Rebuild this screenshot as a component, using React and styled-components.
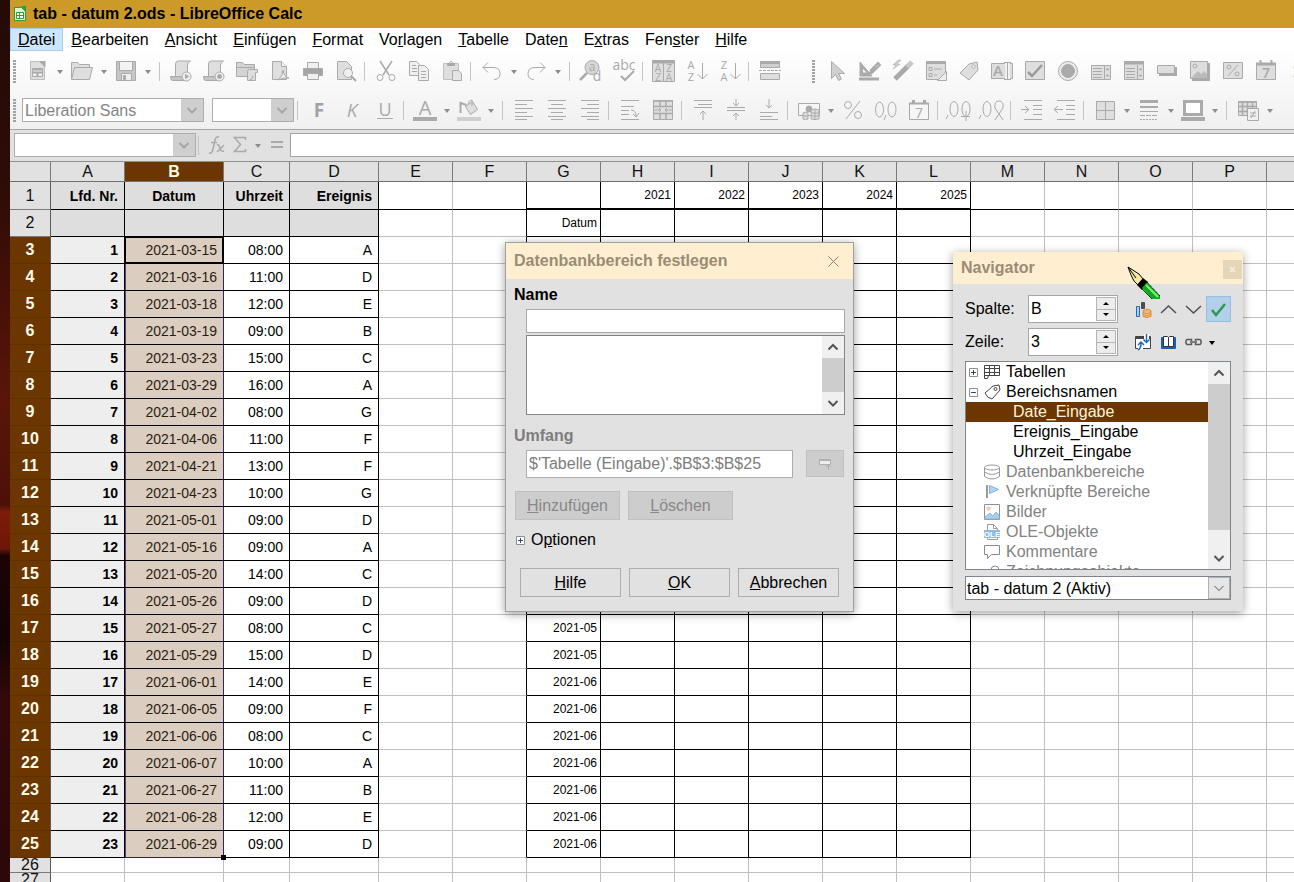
// src/App.jsx

import React from "react";
import styled, { createGlobalStyle, css } from "styled-components";

const GlobalStyle = createGlobalStyle`
  * {
    box-sizing: border-box;
  }
  body {
    margin: 0;
    overflow: hidden;
  }
  button, input, select {
    font: inherit;
    color: inherit;
    margin: 0;
    padding: 0;
    border: none;
    border-radius: 0;
    background: none;
    outline: none;
  }
  select {
    appearance: none;
  }
  svg {
    overflow: visible;
  }
`;

const Desktop = styled.div`
  display: flex;
  height: 100vh;
  font-family: "Liberation Sans", Arial, sans-serif;
  font-size: 16px;
  color: #000;
  background: linear-gradient(
    #250a06 0,
    #2c0c07 180px,
    #461008 300px,
    #5a1509 400px,
    #4c1008 505px,
    #7e1c08 512px,
    #6e1608 548px,
    #1c0404 556px,
    #140303 640px,
    #34090a 700px,
    #2c0808 100%
  );
`;

const AppWindow = styled.div`
  position: relative;
  flex: 1;
  min-width: 0;
  margin-left: 10px;
  overflow: hidden;
  background: #fff;
`;

const TitleBar = styled.header`
  display: flex;
  align-items: center;
  gap: 6px;
  height: 28px;
  padding-left: 3px;
  background: #cb9a29;
  font-weight: bold;
  white-space: nowrap;
`;

const MenuBar = styled.nav`
  display: flex;
  height: 23px;
  background: #fff;
`;

const MenuItem = styled.button`
  padding: 0 7px;
  border: 1px solid ${(p) => (p.$active ? "#a4cdf0" : "transparent")};
  background: ${(p) => (p.$active ? "#cce6fd" : "transparent")};
  white-space: nowrap;
`;

const Toolbars = styled.div`
  background: linear-gradient(#fefefe, #f0f0f0);
  border-bottom: 1px solid #a6a6a6;
`;

const Toolbar = styled.div`
  display: flex;
  align-items: center;
  height: ${(p) => p.$height}px;
  padding-left: 3px;
  overflow: hidden;
`;

const Grip = styled.div`
  flex: none;
  width: 3px;
  height: 23px;
  margin-right: 5px;
  background: repeating-linear-gradient(#a2a2a2 0 2px, transparent 2px 3px);
`;

const ArrowButton = styled.button`
  display: flex;
  flex: none;
  align-items: center;
  justify-content: center;
  width: 11px;
  height: 26px;
`;

const Sep = styled.div`
  flex: none;
  width: 7px;
  height: 19px;
  background: linear-gradient(#c4c4c4, #c4c4c4) 2px 0 / 1px 100% no-repeat;
  ${ArrowButton} + & {
    margin-left: 4px;
  }
`;

const ToolButton = styled.button`
  display: flex;
  flex: none;
  align-items: center;
  justify-content: center;
  width: ${(p) => p.$width || 33}px;
  height: 26px;
`;

const ToolGap = styled.div`
  flex: none;
  width: 26px;
`;

const FontBoxes = styled.div`
  display: flex;
  flex: none;
  gap: 8px;
  margin: 0 1px;
`;

const Combo = styled.div`
  display: flex;
  flex: none;
  width: ${(p) => p.$width}px;
  height: 24px;
  border: 1px solid #adadad;
  background: #fff;
  color: #848484;

  select,
  input {
    flex: 1;
    min-width: 0;
    padding-left: 2px;
  }
`;

const ComboArrow = styled.span`
  display: flex;
  align-items: center;
  justify-content: center;
  width: 22px;
  background: #cfcfcf;
  pointer-events: none;
`;

const FormulaBar = styled.div`
  display: flex;
  align-items: center;
  height: 32px;
  padding: 0 0 1px 4px;
  background: #e1e1e1;
  border-bottom: 1px solid #8f8f8f;
`;

const FormulaInput = styled.input`
  flex: 1;
  height: 24px;
  margin-left: 2px;
  padding: 0 4px;
  background: #fff;
  border: 1px solid #a3a3a3;
  border-right: none;
`;

/* ---------- sheet ---------- */

const Sheet = styled.table`
  table-layout: fixed;
  width: 100%;
  border-collapse: separate;
  border-spacing: 0;

  th,
  td {
    padding: 0;
    overflow: hidden;
    line-height: 14px;
    white-space: nowrap;
  }
`;

const Col = styled.col`
  width: ${(p) => (p.$width ? `${p.$width}px` : "auto")};
`;

const HeadRow = styled.tr`
  height: ${(p) => p.$height}px;
`;

const ColHead = styled.th`
  font-weight: ${(p) => (p.$active ? "bold" : "normal")};
  color: ${(p) => (p.$active ? "#fffbe8" : "#111")};
  background: ${(p) => (p.$active ? "#6b3600" : "#e1e1e1")};
  border-right: 1px solid #7a7a7a;
  border-bottom: 1px solid #6e6e6e;
`;

const RowHead = styled.th`
  font-weight: ${(p) => (p.$active ? "bold" : "normal")};
  color: ${(p) => (p.$active ? "#fffbe8" : "#111")};
  background: ${(p) => (p.$active ? "#6b3600" : "#e1e1e1")};
  border-right: 1px solid #5c5c5c;
  border-bottom: 1px solid ${(p) => (p.$active ? "#603000" : "#7a7a7a")};
`;

const Cell = styled.td`
  text-align: right;
  font-size: 14px;
  border-right: 1px solid ${(p) => (p.$right ? "#000" : "#c0c0c0")};
  border-bottom: 1px solid ${(p) => (p.$bottom ? "#000" : "#c0c0c0")};

  && {
    padding-right: ${(p) => (p.$center ? 0 : p.$small ? 3 : 6)}px;
  }
  ${(p) =>
    p.$small &&
    css`
      font-size: 12px;
    `}
  ${(p) =>
    p.$kind === "head" &&
    css`
      font-weight: bold;
      background: #dedede;
    `}
  ${(p) =>
    p.$center &&
    css`
      text-align: center;
    `}
  ${(p) =>
    p.$kind === "number" &&
    css`
      font-weight: bold;
      background: #eee;
    `}
  ${(p) =>
    p.$kind === "selected" &&
    css`
      color: #2b1c10;
      background: #dbcdc0;
      border-right-color: #39205c;
      box-shadow: inset 1px 0 #5d3f7c;
    `}
  ${(p) =>
    p.$thick &&
    css`
      border-bottom-width: 2px;
    `}
  ${(p) =>
    p.$cursor &&
    css`
      border-right-color: #000;
      box-shadow: inset 0 0 0 1px #000;
    `}
`;

const LastSelected = styled(Cell)`
  position: relative;
  border-bottom-color: #39205c;

  && {
    overflow: visible;
  }

  &::after {
    content: "";
    position: absolute;
    right: -3px;
    bottom: -3px;
    width: 5px;
    height: 5px;
    background: #000;
  }
`;

/* ---------- floating windows ---------- */

const Floating = styled.section`
  position: absolute;
  left: ${(p) => p.$left}px;
  top: ${(p) => p.$top}px;
  width: ${(p) => p.$width}px;
  background: #e1e1e1;
  border: ${(p) => (p.$bordered ? "1px solid #a3a09a" : "none")};
  box-shadow: 0 2px 9px rgba(0, 0, 0, 0.38);
`;

const FloatingTitle = styled.div`
  display: flex;
  align-items: center;
  justify-content: space-between;
  height: ${(p) => p.$height}px;
  padding-left: 8px;
  background: #ffeed0;
  color: #998c76;
  font-weight: bold;

  h2 {
    margin: 0;
    font-size: 16px;
  }
`;

const CloseButton = styled.button`
  display: flex;
  align-items: center;
  justify-content: center;
  width: 40px;
  height: 30px;
`;

const SmallClose = styled.button`
  display: flex;
  align-items: center;
  justify-content: center;
  width: 19px;
  height: 19px;
  margin: 3px 1px 0 0;
  background: #e5d5b9;
`;

const DialogBody = styled.div`
  display: flex;
  flex-direction: column;
  padding: 7px 8px 14px;
`;

const GroupLabel = styled.label`
  font-weight: bold;
  line-height: 18px;
  margin-bottom: 5px;
  color: ${(p) => (p.$dim ? "#7d7d7d" : "#000")};
`;

const NameInput = styled.input`
  height: 24px;
  margin: 0 0 2px 12px;
  padding: 0 4px;
  background: #fff;
  border: 1px solid #a8a8a8;
`;

const RangeList = styled.div`
  display: flex;
  height: 80px;
  margin: 0 0 12px 12px;
  background: #fff;
  border: 1px solid #858585;

  select {
    flex: 1;
    overflow: hidden;
  }
`;

const ScrollBar = styled.div`
  display: flex;
  flex: none;
  flex-direction: column;
  width: 22px;
  background: #f0f0f0;
`;

const ScrollButton = styled.button`
  display: flex;
  flex: none;
  align-items: center;
  justify-content: center;
  height: 22px;
`;

const ScrollThumb = styled.div`
  flex: none;
  height: ${(p) => p.$height}px;
  margin-bottom: auto;
  background: #cdcdcd;
`;

const ScopeRow = styled.div`
  display: flex;
  gap: 13px;
  margin: 0 1px 13px 12px;

  input {
    flex: 1;
    min-width: 0;
    height: 28px;
    padding: 0 2px;
    color: #7d7d7d;
    background: #fff;
    border: 1px solid #adadad;
  }
`;

const DisabledButton = styled.button`
  display: flex;
  align-items: center;
  justify-content: center;
  width: ${(p) => p.$width}px;
  height: ${(p) => p.$height}px;
  color: #888;
  background: #cdcdcd;
  border: 1px solid #c0c0c0;
`;

const EditButtons = styled.div`
  display: flex;
  gap: 8px;
  margin: 0 0 11px 1px;
`;

const OptionsToggle = styled.button`
  display: flex;
  align-items: center;
  gap: 6px;
  height: 18px;
  margin: 0 0 19px 2px;
`;

const DialogButtons = styled.div`
  display: flex;
  gap: 8px;
  margin: 0 6px;
`;

const DialogButton = styled.button`
  flex: 1;
  height: 29px;
  border: 1px solid #adadad;
`;

const NavBody = styled.div`
  display: flex;
  flex-direction: column;
  padding: 11px 12px;
`;

const NavRow = styled.div`
  display: flex;
  align-items: center;
  margin-bottom: 5px;

  label {
    width: 63px;
  }
`;

const SpinBox = styled.div`
  display: flex;
  width: 90px;
  height: 28px;
  margin-right: 13px;
  background: #fff;
  border: 1px solid #a6a6a6;

  input {
    flex: 1;
    min-width: 0;
    padding-left: 2px;
  }
`;

const SpinButtons = styled.div`
  display: flex;
  flex-direction: column;
  width: 20px;
  margin: 1px;

  button {
    display: flex;
    flex: 1;
    align-items: center;
    justify-content: center;
    background: #ededed;
    border: 1px solid #b4b4b4;
  }
  button + button {
    border-top: none;
  }
`;

const NavButton = styled.button`
  display: flex;
  align-items: center;
  justify-content: center;
  width: ${(p) => p.$width || 25}px;
  height: 26px;
  background: ${(p) => (p.$on ? "#b3d0ea" : "transparent")};
  border: 1px solid ${(p) => (p.$on ? "#94bfe4" : "transparent")};
`;

const TreeBox = styled.div`
  display: flex;
  height: 209px;
  margin-bottom: 6px;
  overflow: hidden;
  background: #fff;
  border: 1px solid #7f858c;
`;

const Tree = styled.ul`
  flex: 1;
  min-width: 0;
  margin: 0;
  padding: 0;
  list-style: none;
`;

const TreeItem = styled.li`
  display: flex;
  align-items: center;
  height: 20px;
  padding-left: ${(p) => (p.$level === 2 ? 47 : 3)}px;
  color: ${(p) => (p.$selected ? "#fff3dc" : p.$dim ? "#828282" : "#000")};
  background: ${(p) => (p.$selected ? "#6b3600" : "transparent")};
  white-space: nowrap;
`;

const Toggle = styled.button`
  display: flex;
  width: 15px;
`;

const TreeIcon = styled.span`
  display: flex;
  width: 22px;
`;

const DocSelect = styled.div`
  display: flex;
  height: 24px;
  background: #fff;
  border: 1px solid #7f858c;

  select {
    flex: 1;
    min-width: 0;
    padding-left: 1px;
  }
  span {
    display: flex;
    align-items: center;
    justify-content: center;
    width: 22px;
    background: #e6e6e6;
    border: 1px solid #b0b0b0;
    pointer-events: none;
  }
`;

const PenCursor = styled.svg`
  position: absolute;
  left: 1117px;
  top: 266px;
`;

/* ---------- icons ---------- */

const S = "#aaa";
const F = "#dedede";

const GlyphText = ({ x, y, size = 10, children, weight = 400, fill = S }) => (
  <text
    x={x}
    y={y}
    fontSize={size}
    fontWeight={weight}
    fill={fill}
    stroke="none"
    textAnchor="middle"
    fontFamily="'Open Sans', Lato, sans-serif"
  >
    {children}
  </text>
);

const Lines = ({ rows, w = 18, x = 3, center, right }) =>
  rows.map(([y, len]) => {
    const start = center ? x + (w - len) / 2 : right ? x + w - len : x;
    return <path key={y} d={`M${start} ${y}.5h${len}`} />;
  });

const glyphs = {
  newDoc: (
    <>
      <path fill={F} stroke="#bdbdbd" d="M4.500 2.500h9l5 5v13h-14z" />
      <path fill={S} stroke="none" d="M13 2h6.500v6.500z" />
      <path fill="#efefef" d="M6.500 9.500h10v8h-10z" />
      <path d="M6.500 13.500h10M11.500 13.500v4M6 10.500h11" strokeWidth="2" />
    </>
  ),
  open: (
    <>
      <path fill={F} d="M1.500 19.500v-16h6l2 2h10v3" />
      <path fill={F} d="M1.500 20.500l3-12h18l-3 12z" />
    </>
  ),
  save: (
    <>
      <path fill="#c6c6c6" d="M2.500 2.500h19v19h-19z" />
      <path fill="#f3f3f3" d="M5.500 2.500h13v9h-13z" />
      <path fill="#eee" d="M7.500 14.500h10v7h-10z" />
      <path fill={S} d="M9.500 16.500h2v4h-2z" />
    </>
  ),
  macroRun: (
    <>
      <path fill={F} d="M6.500 17v-12q0-3 3-3h12q-3 1-3 4v11" />
      <path fill="#c4c4c4" d="M1.500 17.500h14v4h-12q-2 0-2-4z" />
      <circle cx="17.500" cy="17.500" r="4.500" fill="#eee" />
      <path fill={S} d="M16.500 15.500l3 2-3 2z" />
    </>
  ),
  macroRec: (
    <>
      <path fill={F} d="M6.500 17v-12q0-3 3-3h12q-3 1-3 4v11" />
      <path fill="#c4c4c4" d="M1.500 17.500h14v4h-12q-2 0-2-4z" />
      <circle cx="17.500" cy="17.500" r="4.500" fill="#eee" />
      <circle cx="17.500" cy="17.500" r="2" fill={S} />
    </>
  ),
  template: (
    <>
      <path fill="#d4d4d4" d="M1.500 17.500v-14h6l2 2h10v12z" />
      <path d="M1.500 8.500h18" />
      <path fill={F} d="M12.500 21.500v-9q0-2 2-2h8v3h-2v8z" />
      <path d="M14 21.500q4-1 4-5" />
    </>
  ),
  pdf: (
    <>
      <path fill={F} d="M4.500 2.500h9l5 5v13h-14z" />
      <path fill="#f4f4f4" d="M13.500 2.500v5h5" />
      <path d="M10 21q5-4 5-10 1 7 6 8-5-1-11 2" fill="#efefef" />
    </>
  ),
  print: (
    <>
      <path fill="#f0f0f0" d="M6.500 3.500h11v6h-11z" />
      <path fill="#a4a4a4" d="M2.500 9.500h19v7h-19z" />
      <path fill="#f0f0f0" d="M6.500 14.500h11v6h-11z" />
    </>
  ),
  preview: (
    <>
      <path fill={F} d="M3.500 2.500h9l5 5v13h-14z" />
      <circle cx="14" cy="14" r="4.500" fill="#f0f0f0" />
      <path d="M17 17l5 5" strokeWidth="2" />
    </>
  ),
  cut: (
    <>
      <path d="M6 2l9 14M18 2L9 16" strokeWidth="1.500" />
      <circle cx="6" cy="18.500" r="3" />
      <circle cx="18" cy="18.500" r="3" />
    </>
  ),
  copy: (
    <>
      <path fill="#efefef" d="M2.500 2.500h7l3 3v11h-10z" />
      <path d="M5 6.500h4M5 9.500h5M5 12.500h5" />
      <path fill="#efefef" d="M11.500 6.500h6l4 4v11h-10z" />
      <path d="M14 12.500h5M14 15.500h5M14 18.500h5" />
    </>
  ),
  paste: (
    <>
      <path fill={F} stroke="#c0c0c0" d="M3.500 4.500h15v16h-15z" />
      <path fill={S} d="M7.500 4.500h7v2h-7z" />
      <path d="M9.500 4q1.500-4 3 0" />
      <path fill="#e4e4e4" d="M12.500 11.500h6l3 3v7h-9z" />
    </>
  ),
  undo: <path d="M8 3.500l-5 5 5 5M3 8.500h10q7 0 7 6t-6 6" />,
  redo: <path d="M16 3.500l5 5-5 5M21 8.500h-10q-7 0-7 6t6 6" />,
  find: (
    <>
      <circle cx="13" cy="8.500" r="7" fill="#d6d6d6" />
      <path d="M8 14l-7 7" strokeWidth="2.500" />
      <GlyphText x={13} y={12} size={12}>a</GlyphText>
      <GlyphText x={18} y={22} size={14}>d</GlyphText>
    </>
  ),
  spell: (
    <>
      <GlyphText x={12} y={11} size={14}>abc</GlyphText>
      <path d="M9 17l4 4 9-9" strokeWidth="2" />
    </>
  ),
  sortDialog: (
    <>
      <path fill={F} d="M.5 1.500h22v21h-22z" />
      <path d="M.5 3h22" strokeWidth="3" />
      <path d="M11.500 3v19" />
      <GlyphText x={6} y={13} size={10}>A</GlyphText>
      <GlyphText x={6} y={22} size={10}>Z</GlyphText>
      <GlyphText x={17} y={13} size={10}>Z</GlyphText>
      <GlyphText x={17} y={22} size={10}>A</GlyphText>
    </>
  ),
  sortAsc: (
    <>
      <GlyphText x={6} y={10} size={11}>A</GlyphText>
      <GlyphText x={6} y={22} size={11}>Z</GlyphText>
      <path d="M17.500 4v16M12.500 15l5 5 5-5" />
    </>
  ),
  sortDesc: (
    <>
      <GlyphText x={6} y={10} size={11}>Z</GlyphText>
      <GlyphText x={6} y={22} size={11}>A</GlyphText>
      <path d="M17.500 4v16M12.500 15l5 5 5-5" />
    </>
  ),
  filter: (
    <>
      <path fill="#cfcfcf" d="M2.500 2.500h19v6h-19z" />
      <path d="M2 3.500h20" strokeWidth="3" />
      <path d="M1 11.500h22" strokeDasharray="3 1" />
      <path fill={F} d="M2.500 14.500h19v6h-19z" />
    </>
  ),
  pointer: <path fill="#d0d0d0" d="M6.500 2.500v17l4-4 3 6 3-1.500-3-5.500h6z" />,
  design: (
    <>
      <path fill={S} d="M2 3v14h12zM4.500 9l5 5h-5z" fillRule="evenodd" />
      <path d="M12 12l8-8M20 4l2 2-8 8-3 1z" strokeWidth="2" />
      <path d="M1 20h20" strokeWidth="3" />
    </>
  ),
  wizard: (
    <>
      <path d="M4 20L17 7" strokeWidth="5" />
      <path d="M16 8l5-5" stroke="#c8c8c8" strokeWidth="5" />
      <path fill="#d0d0d0" d="M7 1l-5 5h3l-3 4 7-5h-3l4-4z" strokeWidth="0.500" />
    </>
  ),
  form: (
    <>
      <path fill={F} d="M2.500 2.500h19v18h-19z" />
      <path d="M2 3.500h20" strokeWidth="3" />
      <path d="M5 8.500h3v3h-3zM5 14.500h3v3h-3zM10 10h8M10 16h3" />
      <path fill="#eee" d="M13.500 21.500h9v-9z" />
    </>
  ),
  tag: (
    <>
      <path fill={F} d="M3 14l9-9 8-2 1 8-9 10z" strokeLinejoin="round" />
      <circle cx="16.500" cy="7.500" r="1.500" fill="#fff" />
    </>
  ),
  textField: (
    <>
      <path fill={F} d="M1.500 4.500h21v15h-21z" />
      <GlyphText x={8} y={17} size={15} weight={600}>A</GlyphText>
      <path d="M15 4h5M17.500 4v16M15 20h5" stroke="#f5f5f5" strokeWidth="4" />
      <path d="M14 3.500h7M17.500 4v16M14 20.500h7" />
    </>
  ),
  check: (
    <>
      <path fill={F} d="M2.500 2.500h19v18h-19z" />
      <path d="M5 13l4 4 10-11" strokeWidth="2.500" stroke="#9a9a9a" />
    </>
  ),
  radio: (
    <>
      <circle cx="12" cy="12" r="9.500" fill="#ececec" />
      <circle cx="12" cy="12" r="6.500" fill={S} />
    </>
  ),
  listBox: (
    <>
      <path fill={F} d="M2.500 6.500h19v14h-19z" />
      <path d="M4 9.500h9M4 12.500h9M4 15.500h9M4 18.500h9M15.500 6v15" />
      <path fill={S} d="M17 11l1.500-2 1.500 2zM17 16l1.500 2 1.500-2z" strokeWidth="0.500" />
    </>
  ),
  comboBox: (
    <>
      <path fill={F} d="M2.500 2.500h19v18h-19z" />
      <path d="M2 4h20" strokeWidth="3" />
      <path d="M4 9.500h9M4 12.500h9M4 15.500h9M4 18.500h9M15.500 6v15" />
      <path fill={S} d="M17 11l1.500-2 1.500 2zM17 16l1.500 2 1.500-2z" strokeWidth="0.500" />
    </>
  ),
  pushButton: (
    <>
      <path fill={S} stroke="none" d="M4 8h18v9h-18z" />
      <path fill={F} d="M2.500 6.500h17v8h-17z" />
    </>
  ),
  image: (
    <>
      <path fill={S} stroke="none" d="M4 4h18v18h-18z" />
      <path fill={F} d="M2.500 2.500h17v17h-17z" />
      <path fill="#bbb" stroke="none" d="M3 19l7-7 3 3 3-3 3 3v4z" />
      <circle cx="7" cy="7" r="2" />
    </>
  ),
  formatted: (
    <>
      <path fill={F} d="M2.500 3.500h19v16h-19z" />
      <path d="M7 17L17 6" />
      <circle cx="8" cy="8" r="2" />
      <circle cx="16" cy="15" r="2" />
    </>
  ),
  dateField: (
    <>
      <path fill={F} d="M2.500 4.500h19v16h-19z" />
      <path d="M2 5h20" strokeWidth="3" />
      <path d="M6.500 1v5M17.500 1v5" strokeWidth="2" />
      <GlyphText x={12} y={19} size={14} weight={600}>7</GlyphText>
    </>
  ),
  spinS: <GlyphText x={11} y={19} size={20}>S</GlyphText>,
  bold: <GlyphText x={12} y={19} size={19} weight={700} fill="#a2a2a2">F</GlyphText>,
  italic: (
    <g fontStyle="italic">
      <GlyphText x={12} y={19} size={19}>K</GlyphText>
    </g>
  ),
  underline: (
    <>
      <GlyphText x={12} y={18} size={18}>U</GlyphText>
      <path d="M4 20.500h16" />
    </>
  ),
  fontColor: (
    <>
      <GlyphText x={12} y={17} size={20}>A</GlyphText>
      <path d="M0 21h24" strokeWidth="4" />
    </>
  ),
  bucket: (
    <>
      <path fill={F} d="M8.500 8.500l7-5 5 8-7 5z" />
      <path d="M3.500 15v-10l6 2" strokeWidth="2" />
      <path d="M15 8V2q-3 0-4 4" />
      <path d="M0 21h24" strokeWidth="4" stroke="#cfcfcf" />
    </>
  ),
  alignLeft: <Lines rows={[[2, 18], [6, 12], [10, 18], [14, 12], [18, 18], [21, 12]]} />,
  alignCenter: <Lines center rows={[[2, 18], [6, 12], [10, 18], [14, 12], [18, 18], [21, 12]]} />,
  alignRight: <Lines right rows={[[2, 18], [6, 12], [10, 18], [14, 12], [18, 18], [21, 12]]} />,
  wrap: (
    <>
      <Lines rows={[[2, 18], [8, 13], [12, 8], [16, 8], [21, 18]]} />
      <path d="M13 12q5 0 5 6M15 16l3 3 3-4" />
    </>
  ),
  merge: (
    <>
      <path fill={F} d="M2.500 2.500h19v19h-19z" />
      <path d="M2 3h20M2.500 8.500h19M2.500 15.500h19M9 3v5M15 3v5M9 16v5M15 16v5" strokeWidth="1.500" />
      <path d="M3 12h7M14 12h7M8 10l2 2-2 2M16 10l-2 2 2 2" />
    </>
  ),
  top: (
    <>
      <path d="M3 2.500h18M3 9.500h18M7 6.500h14" />
      <path d="M12 22v-9M9 16l3-3 3 3" />
    </>
  ),
  middle: (
    <>
      <path d="M3 9.500h18M3 12.500h18" />
      <path d="M12 1v6M9 5l3 3 3-3M12 22v-7M9 18l3-3 3 3" />
    </>
  ),
  bottom: (
    <>
      <path d="M3 21.500h18M3 18.500h12M3 14.500h18" />
      <path d="M12 1v9M9 7l3 3 3-3" />
    </>
  ),
  currency: (
    <>
      <path fill="#f6f6f6" d="M1.500 5.500h21v12h-21z" />
      <circle cx="12" cy="11" r="3" fill={S} />
      <path fill={F} d="M6 15q3-2 5 0v6q-3 1-5 0zM14 12q4-2 8 0v9q-4 1-8 0zM14 15h8M14 18h8M18 12v9M6 18h5" />
    </>
  ),
  percent: (
    <>
      <path d="M5 21L19 3" />
      <circle cx="7" cy="7" r="3.500" />
      <circle cx="17" cy="17" r="3.500" />
    </>
  ),
  number: (
    <>
      <ellipse cx="5.500" cy="11.500" rx="4" ry="7.500" />
      <ellipse cx="18" cy="11.500" rx="4" ry="7.500" />
      <path d="M12 17l-2 5" />
    </>
  ),
  date: (
    <>
      <path fill="#f6f6f6" d="M2.500 5.500h19v16h-19z" />
      <path d="M2 5.500h20" strokeWidth="2" />
      <path d="M6.500 2v4M17.500 2v4" strokeWidth="3" />
      <GlyphText x={12} y={20} size={14}>7</GlyphText>
    </>
  ),
  addDecimal: (
    <>
      <ellipse cx="7" cy="11" rx="4" ry="7.500" />
      <ellipse cx="19" cy="11" rx="4" ry="7.500" />
      <path d="M1 17l-2 4M19 13v10M14 18.500h9" />
    </>
  ),
  delDecimal: (
    <>
      <ellipse cx="7" cy="11" rx="4" ry="7.500" />
      <path d="M1 17l-2 4" />
      <path d="M15 22l8-12q1-7-4-7t-4 7l8 12" />
    </>
  ),
  indent: (
    <>
      <path d="M4 2.500h18M13 7.500h9M13 11.500h9M13 16.500h9M4 21.500h18" />
      <path d="M1 11.500h8M5 8l4 3.500-4 3.500" />
    </>
  ),
  outdent: (
    <>
      <path d="M4 2.500h18M13 7.500h9M13 11.500h9M13 16.500h9M4 21.500h18" />
      <path d="M1 11.500h9M5 8l-4 3.500 4 3.500" />
    </>
  ),
  borders: (
    <>
      <path fill={F} d="M3.500 3.500h18v18h-18z" />
      <path d="M12.500 3v18M3 12.500h18" />
    </>
  ),
  lineStyle: (
    <>
      <path d="M3 3.500h18" strokeWidth="3" />
      <path d="M3 9h18" strokeWidth="2" />
      <path d="M3 13.500h18" />
      <path d="M3 17.500h18" strokeDasharray="5 1" />
      <path d="M3 21.500h18" strokeDasharray="2 1" />
    </>
  ),
  lineColor: (
    <>
      <path fill="#fff" d="M3.500 3.500h17v13h-17z" strokeWidth="3" />
      <path d="M0 21h24" strokeWidth="4" />
    </>
  ),
  condFormat: (
    <>
      <path fill={F} d="M2.500 3.500h18v14h-18z" />
      <path d="M2 4h19M2 8.500h19M2 13.500h19M6.500 3v15M11.500 3v15M16.500 3v15" strokeWidth="1.500" />
      <path fill="#f0f0f0" d="M11.500 10.500h11v12h-11z" />
      <path d="M14 15h6M14 18h6M15 20l4-7" />
    </>
  ),
};

const ToolIcon = ({ name }) => (
  <svg width="24" height="24" viewBox="0 0 24 24" fill="none" stroke={S}>
    {glyphs[name]}
  </svg>
);

const DownTriangle = ({ color = "#8c8c8c" }) => (
  <svg width="8" height="5" viewBox="0 0 8 5">
    <path fill={color} d="M1 1h6l-3 4z" />
  </svg>
);

const Chevron = ({ up, color = "#555", size = 10, weight = 2 }) => (
  <svg width={size} height={size} viewBox="0 0 10 10" fill="none" stroke={color} strokeWidth={weight}>
    <path d={up ? "M0.500 7.500l4.500-4.500 4.500 4.500" : "M0.500 3l4.500 4.500 4.500-4.500"} />
  </svg>
);

const Expander = ({ open }) => (
  <svg width="9" height="9" viewBox="0 0 9 9" fill="#fff" stroke="#8f8f8f">
    <path d="M.5.5h8v8h-8z" />
    <path stroke="#34477a" d={open ? "M2 4.500h5" : "M2 4.500h5M4.500 2v5"} />
  </svg>
);

const CalcLogo = () => (
  <svg width="14" height="16" viewBox="0 0 14 16">
    <path fill="#d9f2cf" stroke="#2f9e2f" d="M1.500 1.500h7l4 4v9h-11z" />
    <path fill="#2f9e2f" d="M8 0h5v6z" />
    <path fill="#fff" stroke="#2f9e2f" d="M3.500 6.500h7v6h-7zM3.500 9.500h7M6.500 6v6" />
  </svg>
);

const treeGlyphs = {
  sheet: (
    <>
      <path fill="#fff" d="M.5 1.500h15v10h-11l-1 3h-3z" />
      <path d="M.5 4.500h15M.5 8.500h15M5.500 1.500v10M10.500 1.500v10M.5 11.500h5" />
    </>
  ),
  tag: (
    <>
      <path d="M1 9l8-7 6-1 1 5-8 9q-5-1-7-6z" strokeLinejoin="round" />
      <circle cx="11.500" cy="5" r="1.500" />
    </>
  ),
  database: (
    <g stroke="#9a9a9a">
      <ellipse cx="8" cy="3.500" rx="7.500" ry="2.500" />
      <path d="M.5 3.500v9q7.500 5 15 0v-9M.5 8q7.500 5 15 0" />
    </g>
  ),
  flag: (
    <>
      <path stroke="#9a9a9a" strokeWidth="2" d="M3 1v13" />
      <path fill="#b5d3ee" stroke="#7fb0dc" d="M5.500 1.500l9 4-9 4z" />
    </>
  ),
  image: (
    <>
      <path fill="#fff" stroke="#8a8f96" d="M.5.5h15v15h-15z" />
      <path fill="#a9cdec" stroke="#8bb9e0" d="M1 13l5-4 3 3 3-4 3 3v4h-14z" />
      <circle cx="4.500" cy="4.500" r="1.500" fill="#f8d0b8" stroke="#f0b898" />
    </>
  ),
  ole: (
    <>
      <path stroke="#9a9a9a" d="M3.500 6v-5.500h6l4 4v2M9.500.5v4h4" />
      <path fill="#8dbde3" stroke="none" d="M0 6h16v8h-16z" />
      <path stroke="#9a9a9a" d="M3.500 14v1.500h10v-1.500" />
      <text x="8" y="13" fontSize="8" fontWeight="bold" textAnchor="middle" fill="#fff" stroke="none">
        OLE
      </text>
    </>
  ),
  comment: <path stroke="#8a8a8a" d="M.5 1.500h15v9h-8l-4 4v-4h-3z" />,
  shapes: (
    <g stroke="#8a8a8a">
      <path d="M.5 5.500h7v6h-7z" />
      <circle cx="11" cy="6" r="4" />
    </g>
  ),
};

const navGlyphs = {
  content: (
    <>
      <path fill="#a9cdec" stroke="#1f6cb5" d="M1.500 5.500h3v10h-3z" />
      <path fill="#4d4d4d" stroke="#4d4d4d" d="M6.500 1.500h3v6h-3z" />
      <path
        fill="#f8b468"
        stroke="#e08d3c"
        d="M8 9.500q4-3 8 0v6q-4 2-8 0zM8 11.500q4 2 8 0M8 13.500q4 2 8 0"
      />
    </>
  ),
  up: <path stroke="#505050" strokeWidth="1.500" d="M1 12l7.500-7 7.500 7" />,
  down: <path stroke="#505050" strokeWidth="1.500" d="M1 5l7.500 7 7.500-7" />,
  tick: <path stroke="#2c9a50" strokeWidth="2.500" d="M2 9l4 5 9-11" />,
  dragMode: (
    <>
      <path fill="#fff" stroke="#444" d="M.5 2.500h15v12h-15z" />
      <path stroke="#444" d="M1 4h15" strokeWidth="2" />
      <path fill="#fff" stroke="none" d="M9 0h5v8h-5zM3 8h5v8h-5z" />
      <path
        stroke="#1f6cb5"
        strokeWidth="1.500"
        d="M11.500 0v8M8.500 5.500l3 3 3-3M3 16q3-1 3-7M3 11l3-3 3 3"
      />
    </>
  ),
  book: (
    <>
      <path fill="#1f5fa8" stroke="#1f5fa8" d="M1.500 3.500h14v11h-14z" />
      <path fill="#fff" stroke="#333" d="M3.500 2.500h4l1 1v9h-5zM13.500 2.500h-4l-1 1v9h5z" />
    </>
  ),
  link: (
    <g stroke="#5a5a5a" strokeWidth="1.500">
      <path d="M6.500 9v1.500h-4.500l-1-1v-3l1-1h4.500v1.500M10.500 7v-1.500h4.500l1 1v3l-1 1h-4.500v-1.500M5 8h7" />
    </g>
  ),
};

const NavIcon = ({ name }) => (
  <svg width="17" height="17" viewBox="0 0 17 17" fill="none">
    {navGlyphs[name]}
  </svg>
);

/* ---------- data ---------- */

const menus = [
  "&Datei",
  "&Bearbeiten",
  "&Ansicht",
  "&Einfügen",
  "&Format",
  "Vo&rlagen",
  "&Tabelle",
  "Date&n",
  "E&xtras",
  "Fen&ster",
  "&Hilfe",
];

// "|" draws a separator, "v" a drop-down arrow, "gap" the start of the next bar
const standardBar = [
  "newDoc", "v", "open", "v", "save", "v", "|",
  "macroRun", "macroRec", "template", "pdf", "print", "preview", "|",
  "cut", "copy", "paste", "|",
  "undo", "v", "redo", "v", "|",
  "find", "spell", "|",
  "sortDialog", "sortAsc", "sortDesc", "|",
  "filter", "gap",
  "pointer", "design", "wizard", "form", "tag", "textField", "check", "radio",
  "listBox", "comboBox", "pushButton", "image", "formatted", "dateField", "spinS",
];

const formatBar = [
  "|", "bold", "italic", "underline", "|",
  "fontColor", "v", "bucket", "v", "|",
  "alignLeft", "alignCenter", "alignRight", "|",
  "wrap", "merge", "|",
  "top", "middle", "bottom", "|",
  "currency", "v", "percent", "number", "date", "|",
  "addDecimal", "delDecimal", "|",
  "indent", "outdent", "|",
  "borders", "v", "lineStyle", "v", "lineColor", "v", "|",
  "condFormat", "v",
];

const columns = [
  ["A", 74], ["B", 99], ["C", 66], ["D", 89], ["E", 74], ["F", 74],
  ["G", 74], ["H", 74], ["I", 74], ["J", 74], ["K", 74], ["L", 74],
  ["M", 74], ["N", 74], ["O", 74], ["P", 74], ["Q", 74],
];

const events = [
  ["2021-03-15", "08:00", "A"],
  ["2021-03-16", "11:00", "D"],
  ["2021-03-18", "12:00", "E"],
  ["2021-03-19", "09:00", "B"],
  ["2021-03-23", "15:00", "C"],
  ["2021-03-29", "16:00", "A"],
  ["2021-04-02", "08:00", "G"],
  ["2021-04-06", "11:00", "F"],
  ["2021-04-21", "13:00", "F"],
  ["2021-04-23", "10:00", "G"],
  ["2021-05-01", "09:00", "D"],
  ["2021-05-16", "09:00", "A"],
  ["2021-05-20", "14:00", "C"],
  ["2021-05-26", "09:00", "D"],
  ["2021-05-27", "08:00", "C", "2021-05"],
  ["2021-05-29", "15:00", "D", "2021-05"],
  ["2021-06-01", "14:00", "E", "2021-06"],
  ["2021-06-05", "09:00", "F", "2021-06"],
  ["2021-06-06", "08:00", "C", "2021-06"],
  ["2021-06-07", "10:00", "A", "2021-06"],
  ["2021-06-27", "11:00", "B", "2021-06"],
  ["2021-06-28", "12:00", "E", "2021-06"],
  ["2021-06-29", "09:00", "D", "2021-06"],
];

const years = { H: "2021", I: "2022", J: "2023", K: "2024", L: "2025" };
const titles = { A: "Lfd. Nr.", B: "Datum", C: "Uhrzeit", D: "Ereignis" };

const treeItems = [
  { text: "Tabellen", icon: "sheet", toggle: "closed" },
  { text: "Bereichsnamen", icon: "tag", toggle: "open" },
  { text: "Date_Eingabe", level: 2, selected: true },
  { text: "Ereignis_Eingabe", level: 2 },
  { text: "Uhrzeit_Eingabe", level: 2 },
  { text: "Datenbankbereiche", icon: "database", dim: true },
  { text: "Verknüpfte Bereiche", icon: "flag", dim: true },
  { text: "Bilder", icon: "image", dim: true },
  { text: "OLE-Objekte", icon: "ole", dim: true },
  { text: "Kommentare", icon: "comment", dim: true },
  { text: "Zeichnungsobjekte", icon: "shapes", dim: true },
];

/* ---------- components ---------- */

const Accel = ({ text }) => {
  const at = text.indexOf("&");
  return (
    <span>
      {text.slice(0, at)}
      <u>{text[at + 1]}</u>
      {text.slice(at + 2)}
    </span>
  );
};

const ToolItems = ({ items }) =>
  items.map((item, i) => {
    if (item === "|") return <Sep key={i} />;
    if (item === "gap")
      return (
        <React.Fragment key={i}>
          <ToolGap />
          <Grip />
        </React.Fragment>
      );
    if (item === "v")
      return (
        <ArrowButton key={i} aria-label="Auswahl">
          <DownTriangle />
        </ArrowButton>
      );
    return (
      <ToolButton key={i} aria-label={item}>
        <ToolIcon name={item} />
      </ToolButton>
    );
  });

const cellText = (col, row) => {
  if (row === 1) return titles[col] || years[col] || "";
  if (row === 2) return col === "G" ? "Datum" : "";
  const event = events[row - 3];
  if (!event) return "";
  if (col === "A") return row - 2;
  return { B: event[0], C: event[1], D: event[2], G: event[3] }[col] || "";
};

const SheetCell = ({ col, row }) => {
  const inLeft = "ABCD".includes(col);
  const inRight = "GHIJKL".includes(col);
  const filled = row <= 25;
  const selected = col === "B" && row > 2 && filled;
  let kind;
  if (inLeft && row <= 2) kind = "head";
  else if (selected) kind = "selected";
  else if (col === "A" && filled) kind = "number";
  const Component = selected && row === 25 ? LastSelected : Cell;

  return (
    <Component
      $kind={kind}
      $small={inRight}
      $center={col === "B" && row === 1}
      $right={filled && (inLeft || inRight || col === "F")}
      $bottom={row === 1 || (filled && (inLeft || inRight))}
      $thick={row === 1 && inRight}
      $cursor={selected && row === 3}
    >
      {cellText(col, row)}
    </Component>
  );
};

const rowHeight = (row) => (row === 1 ? 28 : row > 25 ? 15 : 27);

const SheetGrid = () => (
  <Sheet>
    <colgroup>
      <Col $width={41} />
      {columns.map(([name, width]) => (
        <Col key={name} $width={width} />
      ))}
      <Col />
    </colgroup>
    <thead>
      <HeadRow $height={20}>
        <ColHead />
        {columns.map(([name]) => (
          <ColHead key={name} $active={name === "B"}>
            {name}
          </ColHead>
        ))}
        <ColHead />
      </HeadRow>
    </thead>
    <tbody>
      {Array.from({ length: 27 }, (_, i) => i + 1).map((row) => (
        <HeadRow key={row} $height={rowHeight(row)}>
          <RowHead $active={row > 2 && row <= 25}>{row}</RowHead>
          {columns.map(([name]) => (
            <SheetCell key={name} col={name} row={row} />
          ))}
          <Cell $bottom={row === 1} />
        </HeadRow>
      ))}
    </tbody>
  </Sheet>
);

const RangeDialog = () => (
  <Floating $left={495} $top={242} $width={349} $bordered>
    <FloatingTitle $height={36}>
      <h2>Datenbankbereich festlegen</h2>
      <CloseButton aria-label="Schließen">
        <svg width="11" height="11" viewBox="0 0 11 11" stroke="#8c8270">
          <path d="M.5.5l10 10M10.500.5l-10 10" />
        </svg>
      </CloseButton>
    </FloatingTitle>
    <DialogBody>
      <GroupLabel htmlFor="range-name">Name</GroupLabel>
      <NameInput id="range-name" />
      <RangeList>
        <select size={4} aria-label="Bereiche" />
        <ScrollBar>
          <ScrollButton aria-label="Nach oben">
            <Chevron up />
          </ScrollButton>
          <ScrollThumb $height={34} />
          <ScrollButton aria-label="Nach unten">
            <Chevron />
          </ScrollButton>
        </ScrollBar>
      </RangeList>
      <GroupLabel htmlFor="range-scope" $dim>
        Umfang
      </GroupLabel>
      <ScopeRow>
        <input id="range-scope" defaultValue="$'Tabelle (Eingabe)'.$B$3:$B$25" />
        <DisabledButton $width={38} $height={27} aria-label="Verkleinern">
          <svg width="14" height="12" viewBox="0 0 14 12" fill="#eee" stroke="#b0b0b0">
            <path d="M1.500 1.500h11v5h-11z" />
            <path d="M1 2h12" strokeWidth="2" />
            <path d="M10.500 12v-5M8 9l2.500-2.500 2.500 2.500" fill="none" />
          </svg>
        </DisabledButton>
      </ScopeRow>
      <EditButtons>
        <DisabledButton $width={105} $height={29}>
          <Accel text="&Hinzufügen" />
        </DisabledButton>
        <DisabledButton $width={105} $height={29}>
          <Accel text="&Löschen" />
        </DisabledButton>
      </EditButtons>
      <OptionsToggle>
        <Expander />
        <Accel text="O&ptionen" />
      </OptionsToggle>
      <DialogButtons>
        <DialogButton>
          <Accel text="&Hilfe" />
        </DialogButton>
        <DialogButton>
          <Accel text="&OK" />
        </DialogButton>
        <DialogButton>
          <Accel text="&Abbrechen" />
        </DialogButton>
      </DialogButtons>
    </DialogBody>
  </Floating>
);

const Spinner = ({ id, value }) => (
  <SpinBox>
    <input id={id} defaultValue={value} />
    <SpinButtons>
      <button aria-label="Mehr">
        <svg width="6" height="3" viewBox="0 0 6 3">
          <path d="M0 3h6L3 0z" />
        </svg>
      </button>
      <button aria-label="Weniger">
        <svg width="6" height="3" viewBox="0 0 6 3">
          <path d="M0 0h6L3 3z" />
        </svg>
      </button>
    </SpinButtons>
  </SpinBox>
);

const Navigator = () => (
  <Floating $left={943} $top={252} $width={290}>
    <FloatingTitle $height={32}>
      <h2>Navigator</h2>
      <SmallClose aria-label="Schließen">
        <svg width="7" height="7" viewBox="0 0 7 7" stroke="#f6ead6" strokeWidth="2">
          <path d="M1 1l5 5M6 1l-5 5" />
        </svg>
      </SmallClose>
    </FloatingTitle>
    <NavBody>
      <NavRow>
        <label htmlFor="nav-col">Spalte:</label>
        <Spinner id="nav-col" value="B" />
        <NavButton aria-label="Datenbereich">
          <NavIcon name="content" />
        </NavButton>
        <NavButton aria-label="Anfang">
          <NavIcon name="up" />
        </NavButton>
        <NavButton aria-label="Ende">
          <NavIcon name="down" />
        </NavButton>
        <NavButton aria-label="Inhalte" $on>
          <NavIcon name="tick" />
        </NavButton>
      </NavRow>
      <NavRow>
        <label htmlFor="nav-row">Zeile:</label>
        <Spinner id="nav-row" value="3" />
        <NavButton aria-label="Umschalten">
          <NavIcon name="dragMode" />
        </NavButton>
        <NavButton aria-label="Szenarien">
          <NavIcon name="book" />
        </NavButton>
        <NavButton aria-label="Ziehmodus">
          <NavIcon name="link" />
        </NavButton>
        <NavButton aria-label="Auswahl" $width={12}>
          <DownTriangle color="#000" />
        </NavButton>
      </NavRow>
      <TreeBox>
        <Tree>
          {treeItems.map((item) => (
            <TreeItem
              key={item.text}
              $level={item.level}
              $selected={item.selected}
              $dim={item.dim}
            >
              {item.level !== 2 && (
                <>
                  <Toggle aria-label={item.text} disabled={!item.toggle}>
                    {item.toggle && <Expander open={item.toggle === "open"} />}
                  </Toggle>
                  <TreeIcon>
                    <svg width="17" height="16" viewBox="0 0 17 16" fill="none" stroke="#444">
                      {treeGlyphs[item.icon]}
                    </svg>
                  </TreeIcon>
                </>
              )}
              {item.text}
            </TreeItem>
          ))}
        </Tree>
        <ScrollBar>
          <ScrollButton aria-label="Nach oben">
            <Chevron up />
          </ScrollButton>
          <ScrollThumb $height={146} />
          <ScrollButton aria-label="Nach unten">
            <Chevron />
          </ScrollButton>
        </ScrollBar>
      </TreeBox>
      <DocSelect>
        <select aria-label="Dokument">
          <option>tab - datum 2 (Aktiv)</option>
        </select>
        <span>
          <Chevron weight={1} />
        </span>
      </DocSelect>
    </NavBody>
  </Floating>
);

const App = () => (
  <>
    <GlobalStyle />
    <Desktop>
      <AppWindow>
        <TitleBar>
          <CalcLogo />
          tab - datum 2.ods - LibreOffice Calc
        </TitleBar>
        <MenuBar>
          {menus.map((text, i) => (
            <MenuItem key={text} $active={i === 0}>
              <Accel text={text} />
            </MenuItem>
          ))}
        </MenuBar>
        <Toolbars>
          <Toolbar $height={40}>
            <Grip />
            <ToolItems items={standardBar} />
          </Toolbar>
          <Toolbar $height={38}>
            <Grip />
            <FontBoxes>
              <Combo $width={182}>
                <select aria-label="Schriftart">
                  <option>Liberation Sans</option>
                </select>
                <ComboArrow>
                  <Chevron color="#a6a6a6" />
                </ComboArrow>
              </Combo>
              <Combo $width={82}>
                <input aria-label="Schriftgröße" />
                <ComboArrow>
                  <Chevron color="#a6a6a6" />
                </ComboArrow>
              </Combo>
            </FontBoxes>
            <ToolItems items={formatBar} />
          </Toolbar>
        </Toolbars>
        <FormulaBar>
          <Combo $width={182}>
            <input aria-label="Namensfeld" />
            <ComboArrow>
              <Chevron color="#a6a6a6" />
            </ComboArrow>
          </Combo>
          <Sep />
          <ToolButton $width={27} aria-label="Funktionsassistent">
            <svg width="18" height="22" viewBox="0 0 18 22" fill="none" stroke={S} strokeWidth="1.500">
              <path d="M1 19q3 1 4-4l2-9q1-4 4-3M3 8.500h6M9 11q2-1 3 3t4 3M16 11l-7 7" />
            </svg>
          </ToolButton>
          <ToolButton $width={20} aria-label="Summe">
            <svg width="14" height="18" viewBox="0 0 14 18" fill="none" stroke={S} strokeWidth="1.500">
              <path d="M12.500 4V1.500h-11l6 7-6 7h11V13" />
            </svg>
          </ToolButton>
          <ToolButton $width={16} aria-label="Auswahl">
            <DownTriangle />
          </ToolButton>
          <ToolButton $width={22} aria-label="Formel">
            <svg width="12" height="10" viewBox="0 0 12 10" stroke={S} strokeWidth="2">
              <path d="M0 2h12M0 7h12" />
            </svg>
          </ToolButton>
          <FormulaInput aria-label="Eingabezeile" />
        </FormulaBar>
        <SheetGrid />
        <RangeDialog />
        <Navigator />
        <PenCursor width="34" height="34" viewBox="0 0 34 34">
          <path fill="#f2eaa4" stroke="#000" d="M1 1l3 8 3 6 4 4 5-6-4-5z" />
          <path stroke="#000" d="M1 1l8 11" />
          <path fill="#000" d="M10 19l6-7 5 4-6 8z" />
          <path fill="#10a81c" d="M15 22l5-6 13 14v3h-8z" />
          <path stroke="#000" strokeDasharray="1 1" fill="none" d="M20 16l13 14" />
          <path stroke="#7cf07c" strokeWidth="2" d="M19 19l12 12" />
          <path stroke="#054d0a" d="M15 23l10 10" />
        </PenCursor>
      </AppWindow>
    </Desktop>
  </>
);

export default App;
